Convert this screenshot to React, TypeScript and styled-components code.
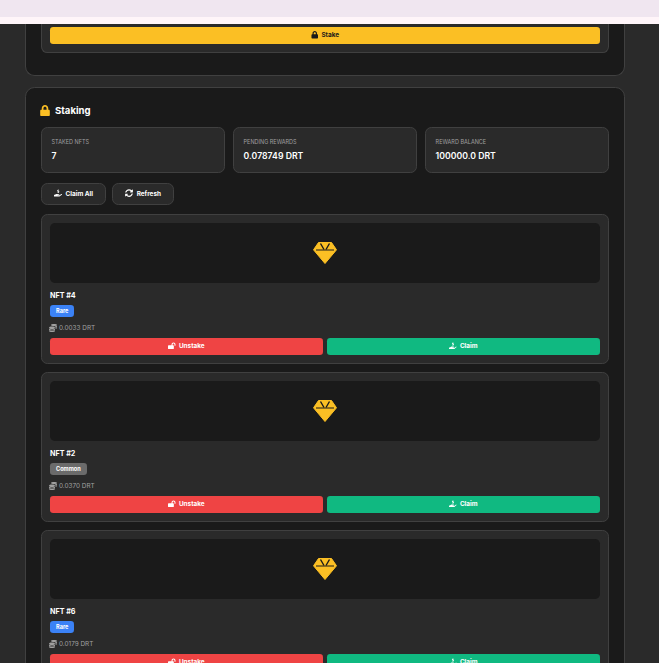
import React from "react";
import styled, { createGlobalStyle } from "styled-components";
import { FaLock, FaLockOpen, FaHandHoldingUsd, FaSyncAlt, FaCoins } from "react-icons/fa";

const Global = createGlobalStyle`
  html, body { margin: 0; padding: 0; height: 100%; overflow: hidden; background: #2a2a2a; }
  * { box-sizing: border-box; }
  body { font-family: Inter, "Liberation Sans", sans-serif; color: #fff; }
`;

const Page = styled.div`
  height: 663px;
  overflow: hidden;
  background: #2a2a2a;
  display: flex;
  flex-direction: column;
`;
const TopBand = styled.div`
  height: 17px;
  flex: none;
  background: #f0e6f0;
`;
const TopEdge = styled.div`
  height: 7px;
  flex: none;
  background: #fff5f9;
`;
const Content = styled.main`
  padding: 0 34px 0 25px;
  display: flex;
  flex-direction: column;
  gap: 11px;
`;
const ClippedPanel = styled.section`
  height: 52px;
  flex: none;
  background: #1a1a1a;
  border: 1px solid #404040;
  border-top: none;
  border-radius: 0 0 9.6px 9.6px;
  padding: 0 15px;
`;
const ClippedCard = styled.div`
  height: 29px;
  background: #2a2a2a;
  border: 1px solid #404040;
  border-top: none;
  border-radius: 0 0 6.4px 6.4px;
  padding: 3px 8px 0;
`;
const Panel = styled.section`
  flex: none;
  background: #1a1a1a;
  border: 1px solid #404040;
  border-radius: 9.6px;
  padding: 15px;
`;
const Title = styled.h2`
  margin: 0 0 9px;
  height: 15px;
  font-size: 9.6px;
  line-height: 15px;
  font-weight: 700;
  display: flex;
  align-items: center;
  gap: 5px;
  color: #fff;
  svg { color: #fbbf24; width: 10px; height: 11px; margin-left: -1px; }
`;
const Stats = styled.div`
  display: grid;
  grid-template-columns: repeat(3, 1fr);
  gap: 8px;
  margin-bottom: 10px;
`;
const Stat = styled.div`
  height: 46px;
  background: #2a2a2a;
  border: 1px solid #404040;
  border-radius: 6.4px;
  padding: 10px 9.6px;
`;
const StatLabel = styled.div`
  font-size: 5.5px;
  line-height: 8px;
  color: #a0a0a0;
  text-transform: uppercase;
  margin-bottom: 4px;
`;
const StatValue = styled.div`
  font-size: 8.7px;
  line-height: 13px;
  font-weight: 600;
  color: #fff;
`;
const Actions = styled.div`
  display: flex;
  gap: 6px;
  margin-bottom: 9px;
`;
const GhostButton = styled.button`
  height: 22px;
  padding: 0 12px;
  background: #2a2a2a;
  border: 1px solid #404040;
  border-radius: 6.4px;
  color: #fff;
  font: 700 6.4px/1 Inter, sans-serif;
  display: flex;
  align-items: center;
  gap: 3.6px;
  svg { width: auto; height: 8px; margin-top: -2px; }
`;
const List = styled.div`
  display: flex;
  flex-direction: column;
  gap: 8px;
`;
const NftCard = styled.article`
  height: 150px;
  flex: none;
  background: #2a2a2a;
  border: 1px solid #404040;
  border-radius: 6.4px;
  padding: 8px;
`;
const Art = styled.div`
  height: 60px;
  background: #1a1a1a;
  border-radius: 4.8px;
  display: flex;
  align-items: center;
  justify-content: center;
  margin-bottom: 8px;
  svg { display: block; width: 24px; height: 22px; }
`;
const NftName = styled.div`
  font-size: 7.2px;
  line-height: 10px;
  font-weight: 700;
  color: #fff;
  margin-bottom: 4px;
`;
const Badge = styled.span<{ $tone: string }>`
  display: block;
  width: fit-content;
  height: 12px;
  padding: 0 6px;
  border-radius: 3.2px;
  background: ${(p) => p.$tone};
  color: #fff;
  font-size: 5.6px;
  line-height: 12px;
  font-weight: 700;
  margin-bottom: 6px;
`;
const Reward = styled.div`
  height: 10px;
  display: flex;
  align-items: center;
  gap: 2px;
  font-size: 6.4px;
  color: #a0a0a0;
  margin-bottom: 5px;
  svg { width: 8px; height: 8px; margin-left: -1px; }
`;
const ButtonRow = styled.div`
  display: grid;
  grid-template-columns: 1fr 1fr;
  gap: 4px;
`;
const SolidButton = styled.button<{ $bg: string; $fg: string }>`
  height: 17px;
  width: 100%;
  border: none;
  border-radius: 3.2px;
  background: ${(p) => p.$bg};
  color: ${(p) => p.$fg};
  font: 700 6.4px/1 Inter, sans-serif;
  display: flex;
  align-items: center;
  justify-content: center;
  gap: 3px;
  padding: 0;
  svg { width: auto; height: 7.5px; margin-top: -1px; }
`;

const GemIcon = () => (
  <svg viewBox="0 0 24 22" aria-hidden="true">
    <path
      d="M5.5 0.5H18.5L23.5 7.8L12 21.5L0.5 7.8Z"
      fill="#fbbf24"
      stroke="#fbbf24"
      strokeLinejoin="round"
    />
    <path d="M3 8H21" stroke="#1a1a1a" strokeWidth="1" />
    <path d="M7.5 1.5L11 7.5M16.5 1.5L13 7.5" stroke="#1a1a1a" strokeWidth="1.4" fill="none" />
  </svg>
);

const nfts = [
  { name: "NFT #4", rarity: "Rare", tone: "#3b82f6", reward: "0.0033 DRT" },
  { name: "NFT #2", rarity: "Common", tone: "#6b6b6b", reward: "0.0370 DRT" },
  { name: "NFT #6", rarity: "Rare", tone: "#3b82f6", reward: "0.0179 DRT" },
];

export default function App() {
  return (
    <Page>
      <Global />
      <TopBand />
      <TopEdge />
      <Content>
        <ClippedPanel>
          <ClippedCard>
            <SolidButton $bg="#fbbf24" $fg="#1a1a1a">
              <FaLock /> Stake
            </SolidButton>
          </ClippedCard>
        </ClippedPanel>
        <Panel>
          <Title>
            <FaLock /> Staking
          </Title>
          <Stats>
            <Stat>
              <StatLabel>Staked NFTs</StatLabel>
              <StatValue>7</StatValue>
            </Stat>
            <Stat>
              <StatLabel>Pending Rewards</StatLabel>
              <StatValue>0.078749 DRT</StatValue>
            </Stat>
            <Stat>
              <StatLabel>Reward Balance</StatLabel>
              <StatValue>100000.0 DRT</StatValue>
            </Stat>
          </Stats>
          <Actions>
            <GhostButton>
              <FaHandHoldingUsd /> Claim All
            </GhostButton>
            <GhostButton>
              <FaSyncAlt /> Refresh
            </GhostButton>
          </Actions>
          <List>
            {nfts.map((n) => (
              <NftCard key={n.name}>
                <Art>
                  <GemIcon />
                </Art>
                <NftName>{n.name}</NftName>
                <Badge $tone={n.tone}>{n.rarity}</Badge>
                <Reward>
                  <FaCoins /> {n.reward}
                </Reward>
                <ButtonRow>
                  <SolidButton $bg="#ef4444" $fg="#fff">
                    <FaLockOpen /> Unstake
                  </SolidButton>
                  <SolidButton $bg="#10b981" $fg="#fff">
                    <FaHandHoldingUsd /> Claim
                  </SolidButton>
                </ButtonRow>
              </NftCard>
            ))}
          </List>
        </Panel>
      </Content>
    </Page>
  );
}
